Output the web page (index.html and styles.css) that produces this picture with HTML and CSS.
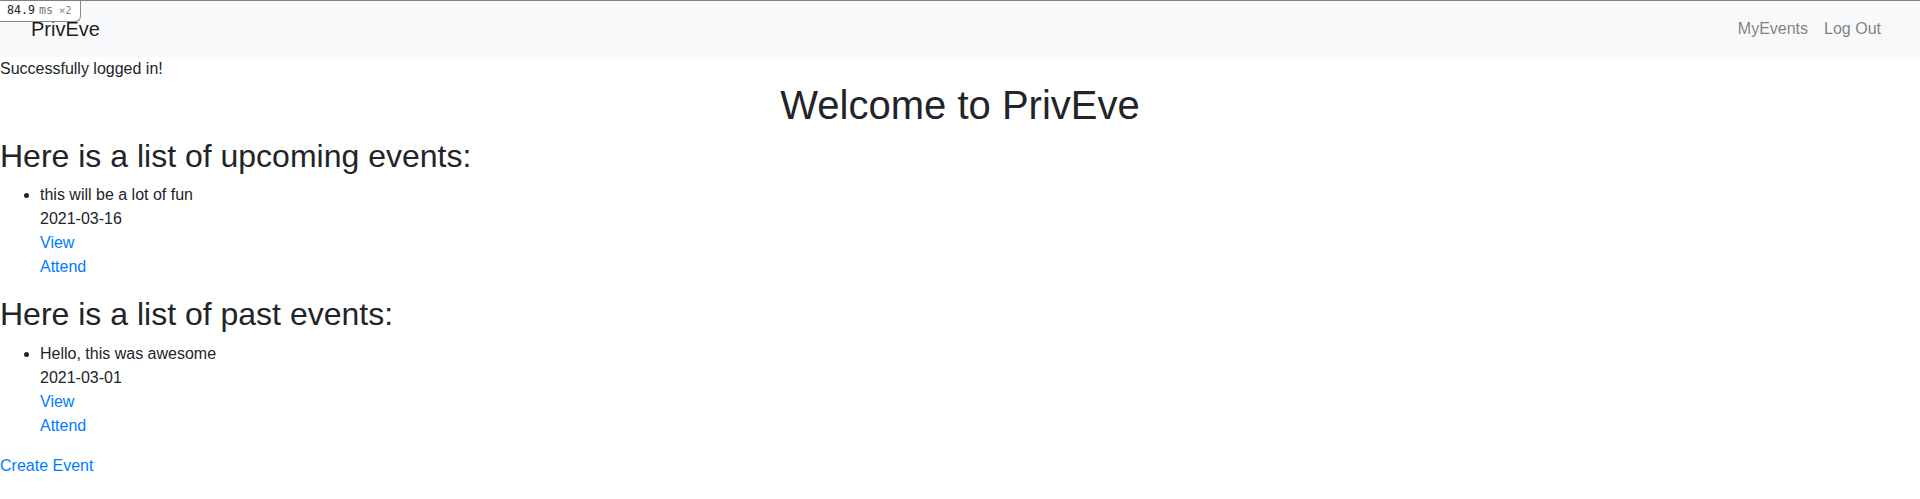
FILE: index.html
```html
<!DOCTYPE html>
<html lang="en">
<head>
<meta charset="utf-8">
<title>PrivEve</title>
<link rel="stylesheet" href="styles.css">
</head>
<body>
<div class="profiler"><span class="num">84.9</span><span class="unit">ms</span><span class="count">×2</span></div>
<nav class="navbar">
  <div class="container-fluid">
    <a class="brand" href="#">PrivEve</a>
    <div class="nav-links">
      <a class="nav-link" href="#">MyEvents</a>
      <a class="nav-link" href="#">Log Out</a>
    </div>
  </div>
</nav>
<p class="notice">Successfully logged in!</p>
<h1 class="title">Welcome to PrivEve</h1>
<h2 class="section">Here is a list of upcoming events:</h2>
<ul class="events">
  <li>this will be a lot of fun<br>2021-03-16<br><a href="#">View</a><br><a href="#">Attend</a></li>
</ul>
<h2 class="section">Here is a list of past events:</h2>
<ul class="events">
  <li>Hello, this was awesome<br>2021-03-01<br><a href="#">View</a><br><a href="#">Attend</a></li>
</ul>
<a href="#">Create Event</a>
</body>
</html>
```
FILE: styles.css
```css
* { box-sizing: border-box; }
html, body { margin: 0; padding: 0; }
body {
  font-family: "Liberation Sans", Arial, sans-serif;
  font-size: 16px;
  line-height: 1.5;
  color: #212529;
  background: #fff;
}
a { color: #007bff; text-decoration: none; }

.profiler {
  position: absolute;
  top: 1px;
  left: 0;
  width: 81px;
  height: 21px;
  padding: 0 0 0 7px;
  background: #fff;
  border: 1px solid #8a8a8a;
  border-top: none;
  border-left: none;
  border-bottom-right-radius: 6px;
  font-family: "DejaVu Sans Mono", "Liberation Mono", monospace;
  font-size: 11.6px;
  line-height: 19px;
  display: flex;
  align-items: baseline;
  white-space: nowrap;
  z-index: 10;
}
.profiler .num { color: #222; }
.profiler .unit { color: #777; margin-left: 4px; }
.profiler .count { color: #888; margin-left: 6px; font-size: 10.5px; }

.navbar {
  background: #f8f9fa;
  border-top: 1px solid #808080;
  padding: 8px 16px;
}
.container-fluid {
  padding: 0 15px;
  display: flex;
  align-items: center;
  justify-content: space-between;
}
.brand {
  color: rgba(0,0,0,.9);
  font-size: 20px;
  line-height: 30px;
  padding: 5px 0;
}
.nav-links { display: flex; }
.nav-link {
  color: rgba(0,0,0,.5);
  padding: 8px;
  line-height: 24px;
}

.notice { margin: 0; }
.title {
  margin: 0 0 8px;
  font-size: 40px;
  font-weight: 500;
  line-height: 1.2;
  text-align: center;
}
.section {
  margin: 0 0 8px;
  font-size: 32px;
  font-weight: 500;
  line-height: 1.2;
}
.events {
  margin: 0 0 16px;
  padding-left: 40px;
}
```
